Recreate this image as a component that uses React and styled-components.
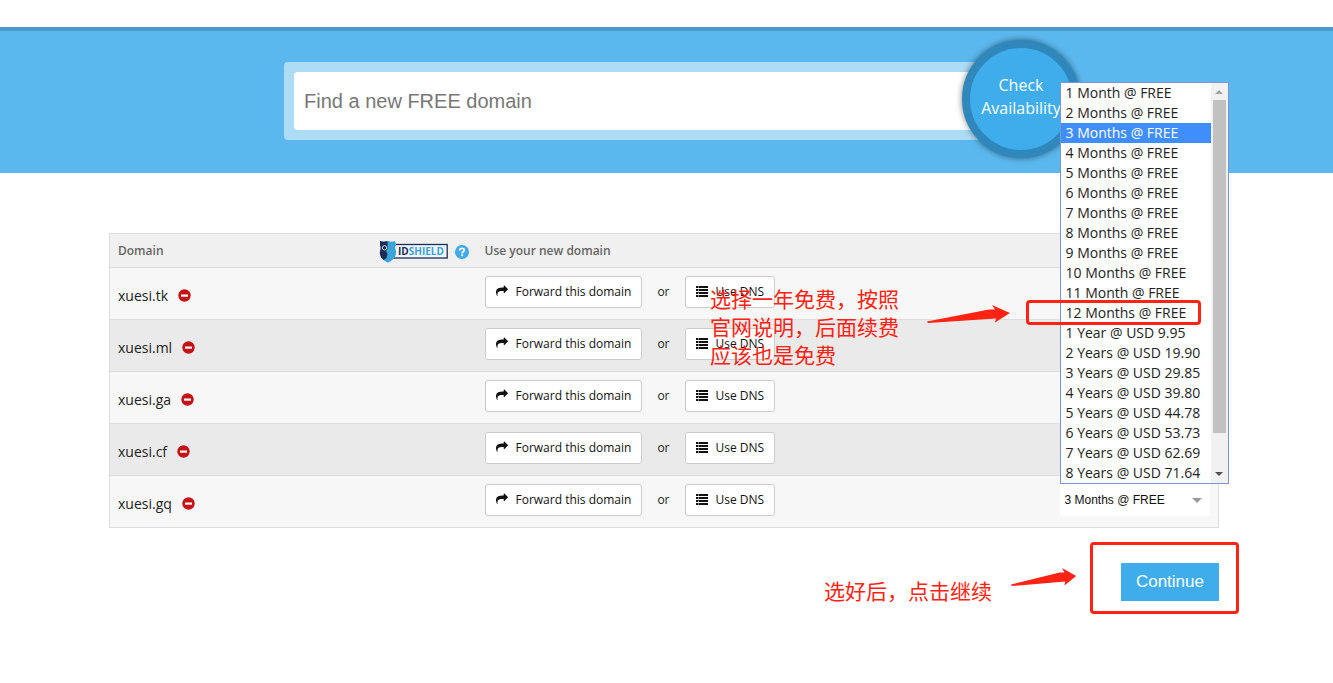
import React, { useState } from 'react';
import styled, { createGlobalStyle } from 'styled-components';

const GlobalStyle = createGlobalStyle`
  body {
    margin: 0;
    background-color: #fff;
    color: #222;
    font-family: 'Open Sans', 'Noto Sans CJK SC', sans-serif;
    font-size: 14px;
  }

  * {
    box-sizing: border-box;
  }
`;

const Page = styled.div`
  padding-top: 27px;
`;

const Hero = styled.header`
  border-top: 4px solid #4a9bc9;
  background-color: #5bb8ee;
  padding: 31px 114px 33px 109px;
`;

const SearchForm = styled.form`
  position: relative;
  max-width: 760px;
  margin: 0 auto;
  padding: 10px;
  border-radius: 4px;
  background-color: #addcf7;
`;

const SearchInput = styled.input`
  display: block;
  width: 100%;
  height: 58px;
  padding: 0 140px 0 10px;
  border: 0;
  border-radius: 4px;
  background-color: #fff;
  color: #333;
  font-family: 'Liberation Sans', sans-serif;
  font-size: 20px;

  &::placeholder {
    color: #777;
    opacity: 1;
  }
`;

const CheckButton = styled.button`
  position: absolute;
  top: -22px;
  right: -36px;
  width: 118px;
  height: 118px;
  padding: 0 0 4px;
  border: 8px solid #2f87bb;
  border-radius: 50%;
  background-color: #3faceb;
  box-shadow: 0 0 6px 0 rgba(0, 0, 0, 0.5);
  color: #fff;
  font-family: 'Open Sans', sans-serif;
  font-size: 16px;
  line-height: 23px;
  white-space: nowrap;
  display: flex;
  justify-content: center;
  align-items: center;
`;

const Main = styled.main`
  padding: 60px 114px 0 109px;
`;

const DomainTable = styled.table`
  width: 100%;
  table-layout: fixed;
  border: 1px solid #ddd;
  border-collapse: collapse;
`;

const HeadCell = styled.th`
  width: ${(props) => props.$width || 'auto'};
  height: 34px;
  padding: 0 8px;
  border-bottom: 1px solid #ddd;
  background-color: #f0f0f0;
  color: #666;
  font-size: 12px;
  font-weight: 600;
  text-align: left;
`;

const HeadInner = styled.div`
  display: flex;
  justify-content: space-between;
  align-items: center;
`;

const ShieldGroup = styled.span`
  display: flex;
  align-items: center;
  gap: 7px;
  padding-top: 2px;
`;

const Row = styled.tr`
  background-color: #f7f7f7;
  border-bottom: 1px solid #ddd;

  &:nth-child(even) {
    background-color: #eaeaea;
  }
`;

const Cell = styled.td`
  height: 52px;
  padding: 0 8px;
`;

const DomainName = styled.div`
  display: flex;
  align-items: center;
  gap: 10px;
  padding-top: 4px;
`;

const Actions = styled.div`
  display: flex;
  align-items: center;
  gap: 15px;
  padding-bottom: 3px;
  font-size: 12px;
`;

const Or = styled.span`
  padding-bottom: 2px;
`;

const ActionButton = styled.button`
  height: 32px;
  padding: 0 10px 2px;
  border: 1px solid #ccc;
  border-radius: 3px;
  background-color: #fff;
  color: #111;
  font-family: 'Open Sans', sans-serif;
  font-size: 12px;
  white-space: nowrap;
  display: flex;
  align-items: center;
  gap: 8px;
`;

const Period = styled.div`
  position: relative;
  width: 150px;
  margin-bottom: 3px;
`;

const PeriodSelect = styled.select`
  display: block;
  width: 100%;
  height: 32px;
  padding: 0 5px;
  border: 0;
  appearance: none;
  background-color: #fff;
  color: #111;
  font-family: 'Liberation Sans', sans-serif;
  font-size: 12px;
`;

const Caret = styled.span`
  position: absolute;
  top: 14px;
  right: 8px;
  border: 5px solid transparent;
  border-top-color: #999;
  border-bottom: 0;
  pointer-events: none;
`;

const Menu = styled.div`
  position: absolute;
  z-index: 2;
  bottom: 100%;
  left: 0;
  width: 169px;
  border: 1px solid #7a96d2;
  background-color: #fff;
  display: flex;
`;

const OptionList = styled.ul`
  flex: 1;
  margin: 0;
  padding: 0;
  list-style: none;
`;

const Option = styled.li`
  height: 20px;
  padding-left: 5px;
  background-color: ${(props) => props.$active ? '#3f8efc' : '#fff'};
  color: ${(props) => props.$active ? '#fff' : '#222'};
  font-size: 14px;
  line-height: 20px;
  white-space: nowrap;
  cursor: default;
`;

const ScrollTrack = styled.div`
  width: 17px;
  padding: 7px 2px;
  background-color: #f1f1f1;
  display: flex;
  flex-direction: column;
  align-items: center;
  gap: 6px;
`;

const ScrollThumb = styled.div`
  width: 13px;
  height: 333px;
  background-color: #c1c1c1;
`;

const ScrollArrow = styled.span`
  border: 4px solid transparent;
  border-top: ${(props) => props.$up ? '0' : '4px solid #505050'};
  border-bottom: ${(props) => props.$up ? '4px solid #a3a3a3' : '0'};
  margin-top: ${(props) => props.$up ? '0' : 'auto'};
`;

const Mark = styled.span`
  position: absolute;
  z-index: 3;
  top: 217px;
  left: -35px;
  width: 175px;
  height: 25px;
  border: 3px solid #ff2314;
  border-radius: 4px;
  pointer-events: none;
`;

const Note = styled.p`
  margin: 0;
  color: #ff2314;
  font-family: 'Noto Sans CJK SC', sans-serif;
  font-size: 21px;
  line-height: 28px;
  white-space: nowrap;
`;

const TableArea = styled.div`
  position: relative;
`;

const TableNote = styled.div`
  position: absolute;
  top: 51px;
  right: 208px;
  display: flex;
  gap: 28px;
  pointer-events: none;
`;

const ArrowSlot = styled.span`
  padding: ${(props) => props.$padding};
  display: flex;
`;

const Footer = styled.footer`
  margin: 14px -20px 0 0;
  display: flex;
  justify-content: flex-end;
`;

const FooterNote = styled.div`
  padding: 26px 13px 2px 0;
  display: flex;
  align-items: center;
  gap: 19px;
`;

const ContinueFrame = styled.div`
  padding: 18px 17px 10px 28px;
  border: 3px solid #ff2314;
  border-radius: 4px;
`;

const ContinueButton = styled.button`
  display: block;
  height: 38px;
  padding: 0 15px;
  border: 0;
  background-color: #3faceb;
  color: #fff;
  font-family: 'Liberation Sans', sans-serif;
  font-size: 17px;
`;

const ForwardIcon = () => (
  <svg width="12" height="12" viewBox="0 0 1792 1792" fill="currentColor" aria-hidden="true">
    <path d="M1792 640q0 26-19 45l-512 512q-19 19-45 19t-45-19-19-45v-256h-224q-98 0-175.500 6t-154 21.500-133 42.500-105.500 69.500-80 101-48.500 138.500-17.500 181q0 55 5 123 0 6 2.500 23.500t2.500 26.500q0 15-8.500 25t-23.500 10q-16 0-28-17-7-9-13-22t-13.500-30-10.500-24q-127-285-127-451 0-199 53-333 162-403 875-403h224v-256q0-26 19-45t45-19 45 19l512 512q19 19 19 45z" />
  </svg>
);

const ListIcon = () => (
  <svg width="12" height="11" viewBox="0 0 12 11" fill="currentColor" aria-hidden="true">
    {[0, 3, 6, 9].map((y) => (
      <path key={y} d={`M0 ${y}h2v2h-2zM2.500 ${y}h9.500v2h-9.500z`} />
    ))}
  </svg>
);

const MinusIcon = () => (
  <svg width="13" height="13" viewBox="0 0 13 13" aria-hidden="true">
    <circle cx="6.500" cy="6.500" r="6.200" fill="#c41216" />
    <rect x="3" y="5.500" width="7" height="2.200" fill="#fff" />
  </svg>
);

const HelpIcon = () => (
  <svg width="14" height="14" viewBox="0 0 14 14" aria-hidden="true">
    <circle cx="7" cy="7" r="7" fill="#3faaef" />
    <path d="M4.700 5.500c0-1.400 1-2.100 2.300-2.100s2.300.7 2.300 1.900c0 1.500-2.200 1.500-2.200 3.100" fill="none" stroke="#fff" strokeWidth="1.800" />
    <rect x="6.200" y="9.300" width="1.900" height="1.900" fill="#fff" />
  </svg>
);

const ShieldLogo = () => (
  <svg width="69" height="23" viewBox="0 0 69 23" role="img" aria-label="IDShield">
    <rect x="10" y="4.500" width="58.200" height="13.500" fill="#f4f6f8" stroke="#1d2c55" strokeWidth="1.300" />
    <path d="M1 1q3.500 1.500 7.500 0 4.500 1.500 7.500 0l1 4q-1.500 2 0 6 .7 8-8.200 11.500-8.500-3.500-7.800-11.500 1.500-3 0-6z" fill="#3aa3d8" />
    <path d="M1 1q3.500 1.500 7.500 0v7.500l-1.500 2.500 1.500 3-1 4-3 2q-4.500-3.500-3.500-9 1.500-3 0-6z" fill="#1d2c55" />
    <circle cx="5.500" cy="7.800" r="2.200" fill="none" stroke="#cfe0ee" strokeWidth="1" />
    <text x="19" y="15" fontFamily="Open Sans, sans-serif" fontSize="10" fontWeight="700" fill="#1d2c55">
      ID<tspan fill="#3aa3d8">SHIELD</tspan>
    </text>
  </svg>
);

const RedArrow = ({ width, height }) => (
  <svg width={width} height={height} viewBox="0 0 84 18" preserveAspectRatio="none" fill="#ff2314" aria-hidden="true">
    <path d="M0 16.500L62 4.500 68 4.500 65 0 83 8 68 17.500 69 13.500 1 18z" />
  </svg>
);

const domains = ['xuesi.tk', 'xuesi.ml', 'xuesi.ga', 'xuesi.cf', 'xuesi.gq'];

const periods = [
  '1 Month @ FREE',
  '2 Months @ FREE',
  '3 Months @ FREE',
  '4 Months @ FREE',
  '5 Months @ FREE',
  '6 Months @ FREE',
  '7 Months @ FREE',
  '8 Months @ FREE',
  '9 Months @ FREE',
  '10 Months @ FREE',
  '11 Month @ FREE',
  '12 Months @ FREE',
  '1 Year @ USD 9.95',
  '2 Years @ USD 19.90',
  '3 Years @ USD 29.85',
  '4 Years @ USD 39.80',
  '5 Years @ USD 44.78',
  '6 Years @ USD 53.73',
  '7 Years @ USD 62.69',
  '8 Years @ USD 71.64',
];

const PeriodMenu = ({ value, onPick }) => (
  <Menu>
    <OptionList role="listbox" aria-label="Period">
      {periods.map((period) => (
        <Option
          key={period}
          role="option"
          aria-selected={period === value}
          $active={period === value}
          onClick={() => onPick(period)}
        >
          {period}
        </Option>
      ))}
    </OptionList>
    <ScrollTrack>
      <ScrollArrow $up />
      <ScrollThumb />
      <ScrollArrow />
    </ScrollTrack>
    <Mark />
  </Menu>
);

const DomainRow = ({ domain, open }) => {
  const [period, setPeriod] = useState('3 Months @ FREE');

  return (
    <Row>
      <Cell>
        <DomainName>
          {domain}
          <MinusIcon />
        </DomainName>
      </Cell>
      <Cell>
        <Actions>
          <ActionButton type="button">
            <ForwardIcon />
            Forward this domain
          </ActionButton>
          <Or>or</Or>
          <ActionButton type="button">
            <ListIcon />
            Use DNS
          </ActionButton>
        </Actions>
      </Cell>
      <Cell>
        <Period>
          <PeriodSelect
            aria-label={`Period for ${domain}`}
            value={period}
            onChange={(e) => setPeriod(e.target.value)}
          >
            {periods.map((item) => <option key={item}>{item}</option>)}
          </PeriodSelect>
          <Caret />
          {open && <PeriodMenu value={period} onPick={setPeriod} />}
        </Period>
      </Cell>
    </Row>
  );
};

const App = () => (
  <Page>
    <GlobalStyle />
    <Hero>
      <SearchForm onSubmit={(e) => e.preventDefault()}>
        <SearchInput type="text" aria-label="Find a new FREE domain" placeholder="Find a new FREE domain" />
        <CheckButton type="submit">
          Check
          <br />
          Availability
        </CheckButton>
      </SearchForm>
    </Hero>
    <Main>
      <TableArea>
        <DomainTable>
          <thead>
            <tr>
              <HeadCell $width="367px">
                <HeadInner>
                  Domain
                  <ShieldGroup>
                    <ShieldLogo />
                    <HelpIcon />
                  </ShieldGroup>
                </HeadInner>
              </HeadCell>
              <HeadCell>Use your new domain</HeadCell>
              <HeadCell $width="167px" aria-label="Period" />
            </tr>
          </thead>
          <tbody>
            {domains.map((domain, index) => (
              <DomainRow key={domain} domain={domain} open={index === domains.length - 1} />
            ))}
          </tbody>
        </DomainTable>
        <TableNote>
          <Note>
            选择一年免费，按照
            <br />
            官网说明，后面续费
            <br />
            应该也是免费
          </Note>
          <ArrowSlot $padding="21px 0 0">
            <RedArrow width={84} height={18} />
          </ArrowSlot>
        </TableNote>
      </TableArea>
      <Footer>
        <FooterNote>
          <Note>选好后，点击继续</Note>
          <ArrowSlot $padding="0 0 26px">
            <RedArrow width={66} height={18} />
          </ArrowSlot>
        </FooterNote>
        <ContinueFrame>
          <ContinueButton type="button">Continue</ContinueButton>
        </ContinueFrame>
      </Footer>
    </Main>
  </Page>
);

export default App;
